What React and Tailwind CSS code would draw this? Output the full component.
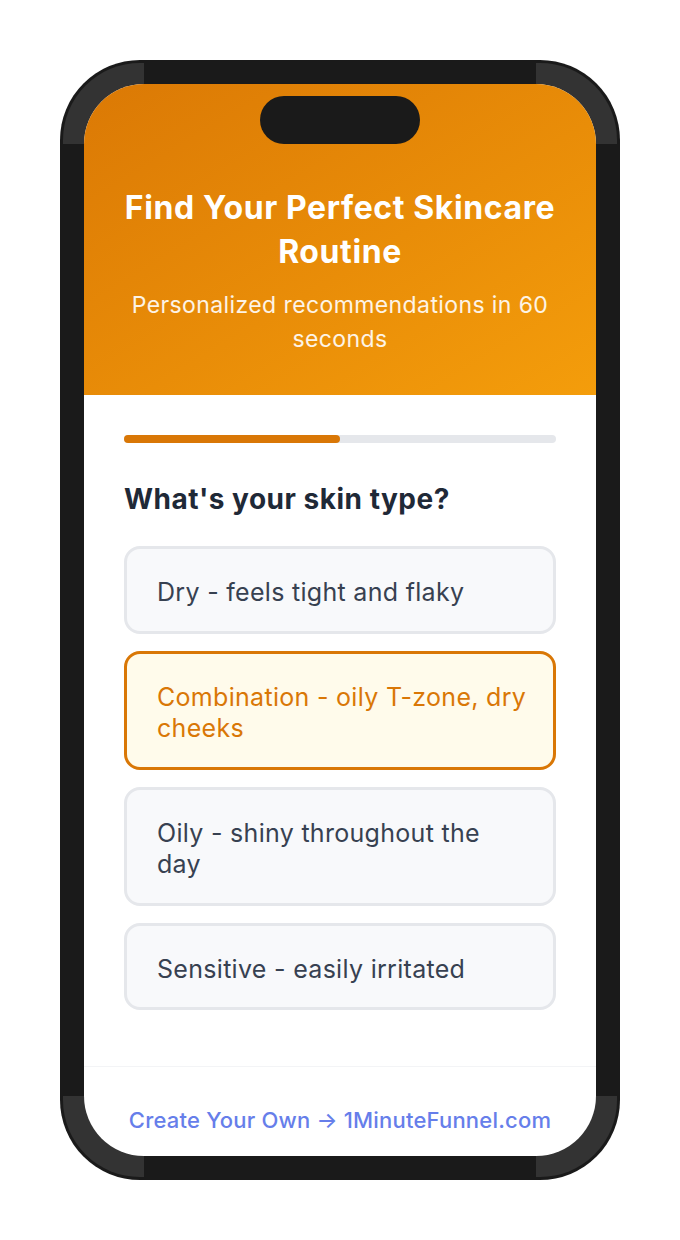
const options = [
  { id: 'dry', label: 'Dry - feels tight and flaky' },
  { id: 'combo', label: 'Combination - oily T-zone, dry cheeks' },
  { id: 'oily', label: 'Oily - shiny throughout the day' },
  { id: 'sensitive', label: 'Sensitive - easily irritated' },
];

function Option({ label, selected }) {
  return (
    <button
      type="button"
      className={
        selected
          ? 'w-full text-left rounded-[16px] border-[3px] border-[#d97706] bg-[#fffbeb] pl-[30px] pr-[25px] pt-[28px] pb-[22px] text-[25px] leading-[31.5px] tracking-[0.3px] text-[#d97706]'
          : 'w-full text-left rounded-[16px] border-[3px] border-[#e5e7eb] bg-[#f8f9fb] pl-[30px] pr-[25px] pt-[28px] pb-[22px] text-[25px] leading-[31.5px] tracking-[0.3px] text-[#374151]'
      }
    >
      {label}
    </button>
  );
}

export default function App() {
  const selected = 'combo';
  const progress = 50;

  return (
    <div className="min-h-screen bg-white flex justify-center pt-[60px] font-['Inter','Noto_Sans',sans-serif]">
      {/* phone frame */}
      <div className="w-[560px] h-[1120px] rounded-[80px] bg-[#1a1a1a] p-[3px]">
        <div className="h-full rounded-[77px] bg-[#333333] bg-[linear-gradient(to_right,transparent_81px,#1a1a1a_81px,#1a1a1a_calc(100%_-_81px),transparent_calc(100%_-_81px)),linear-gradient(to_bottom,transparent_81px,#1a1a1a_81px,#1a1a1a_calc(100%_-_81px),transparent_calc(100%_-_81px))] p-[21px]">
          <div className="h-full rounded-[60px] overflow-hidden bg-white flex flex-col">
            <header className="bg-linear-to-br from-[#db7905] to-[#f49d0b] px-[30px] pt-[12px] pb-[39px] text-center text-white">
              <div className="mx-auto w-[160px] h-[48px] rounded-full bg-[#1a1a1a]" />
              <h1 className="mt-[42px] text-[32px] leading-[44px] tracking-[0.6px] font-bold">
                Find Your Perfect Skincare Routine
              </h1>
              <p className="mt-[14px] px-[10px] text-[23px] leading-[34px] tracking-[0.4px] text-white/90">
                Personalized recommendations in 60 seconds
              </p>
            </header>

            <main className="flex-1 px-[40px] pt-[40px]">
              <div className="h-[8px] rounded-full bg-[#e5e7eb]">
                <div className="h-full rounded-full bg-[#d97706]" style={{ width: `${progress}%` }} />
              </div>

              <h2 className="mt-[38px] mb-[29px] text-[28px] leading-[36px] tracking-[0.5px] font-bold text-[#1f2937]">
                What's your skin type?
              </h2>

              <div className="flex flex-col gap-[17px]">
                {options.map((o) => (
                  <Option key={o.id} label={o.label} selected={o.id === selected} />
                ))}
              </div>
            </main>

            <footer className="h-[90px] shrink-0 border-t border-[#f3f4f6] pt-[39px] text-center">
              <a href="#" className="text-[22px] leading-[28px] tracking-[0.2px] font-medium text-[#667eea]">
                Create Your Own → 1MinuteFunnel.com
              </a>
            </footer>
          </div>
        </div>
      </div>
    </div>
  );
}
